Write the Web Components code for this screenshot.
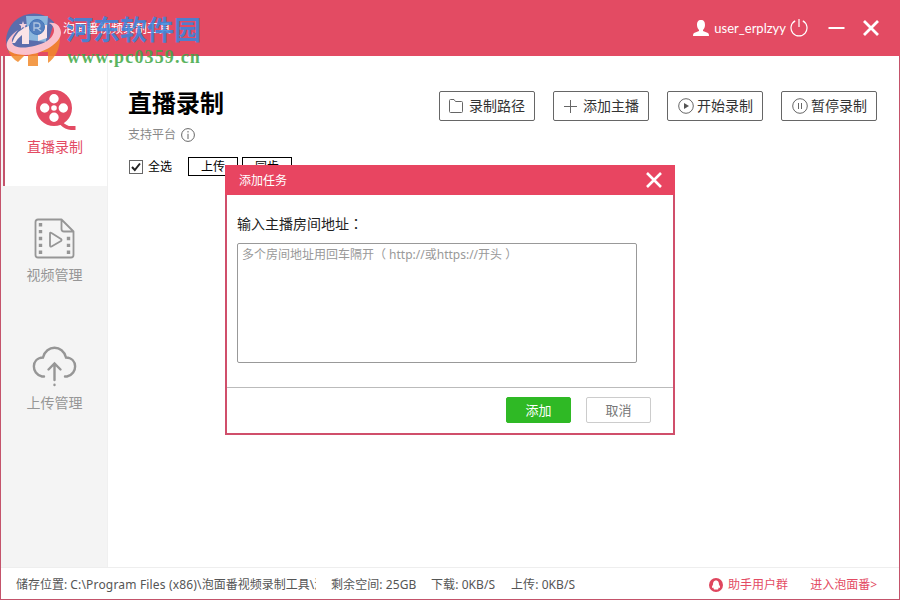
<!DOCTYPE html>
<html lang="zh-CN">
<head>
<meta charset="utf-8">
<title>泡面番视频录制工具</title>
<style>
html, body {
  margin: 0;
  height: 100%;
  overflow: hidden;
}
body {
  --color-main: #e34b63;
  --color-edge: #c4536b;
  --color-gray: #969696;
  --color-dark: #333;
  font: 12px/16px "Noto Sans", "Noto Sans CJK SC", sans-serif;
  color: #555;
  background: #fff;
}
</style>
</head>
<body>
<recorder-app></recorder-app>

<script>
const define = (name, html) => {
  const template = document.createElement('template');
  template.innerHTML = html;
  customElements.define(name, class extends HTMLElement {
    constructor() {
      super();
      this.attachShadow({mode: 'open'});
      this.shadowRoot.appendChild(template.content.cloneNode(true));
    }
  });
};

// Badge that lies over the top left corner
define('site-mark', `
<style>
:host {
  position: absolute;
  left: 4px;
  top: 9px;
  width: 200px;
  height: 60px;
  opacity: 0.85;
  pointer-events: none;
}
svg { position: absolute; left: 0; top: 0; }
.name, .url { position: absolute; white-space: nowrap; }
.name {
  left: 62px;
  top: 4px;
  font: 700 27px/32px "Noto Sans CJK SC", sans-serif;
  color: #3687df;
}
.url {
  left: 63px;
  top: 37px;
  font: 700 18px/22px "Liberation Serif", serif;
  letter-spacing: 1.15px;
  color: #3fa845;
}
</style>
<svg width="60" height="60" viewBox="0 0 60 60">
  <path d="M2 31A28 28 0 0 1 50 13L44 34L5 44Q2 38 2 31Z" fill="#4474b9"/>
  <path d="M4 41Q31 47 56 28Q56 45 44 54V43H34V57H24V43L14 53Q7 49 4 41Z" fill="#f28a2b"/>
  <path d="M22 7H44L42 33L24 31Z" fill="#7cc9f3"/>
  <path d="M14 21C-4 34 0 46 22 46C40 45 58 33 57 23C56 16 51 13 45 14C52 17 52 26 43 32C31 39 9 42 8 33Q7 29 14 21Z" fill="#ffd6df"/>
  <path d="M8 34Q13 20 25 17V35H18V26Q14 29 11 34Z M34 32V16H43V29Z" fill="#fff"/>
  <path d="M19 12l1 3 3 0-2 2 1 3-3-2-2 2 0-3-2-2 3 0Z" fill="#f5e8f2"/>
  <circle cx="33" cy="18" r="7.500" fill="#3d8ad0" stroke="#287dc8"/>
  <path d="M30 22V14H33Q36 14 36 17Q36 19 33 19H30M33 19L37 22" fill="none" stroke="#a7daf6" stroke-width="1.300"/>
</svg>
<span class="name">河东软件园</span>
<span class="url">www.pc0359.cn</span>
`);

define('title-bar', `
<style>
:host {
  display: flex;
  align-items: center;
  height: 56px;
  padding: 0 20px 0 63px;
  box-sizing: border-box;
  color: #fff;
  background: var(--color-main);
}
.title { flex: 1; padding-top: 2px; }
.user { font: 13px/16px Lato, sans-serif; margin: 0 4px 0 5px; }
svg { display: block; fill: none; stroke: #fff; }
.min { margin: 0 17px 0 20px; }
</style>
<span class="title"><slot></slot></span>
<svg width="16" height="16" viewBox="0 0 16 16"><path d="M8 0C5 0 4 2 4 5c0 2 1 4 2 5v1L1 13q-1 .5-1 3h16q0-2.500-1-3l-5-2v-1c1-1 2-3 2-5 0-3-1-5-4-5Z" fill="#fff" stroke="none"/></svg>
<span class="user"><slot name="user"></slot></span>
<svg width="18" height="18" viewBox="0 0 18 18" stroke-width="1.200"><path d="M5.200 1.900A8 8 0 1 0 12.800 1.900M9 0v8"/></svg>
<svg class="min" width="17" height="18" viewBox="0 0 17 18" stroke-width="2"><path d="M.5 9H16.500"/></svg>
<svg width="18" height="18" viewBox="0 0 18 18" stroke-width="2.800"><path d="M2 2 16 16M16 2 2 16"/></svg>
`);

define('side-item', `
<style>
:host {
  display: flex;
  flex-direction: column;
  align-items: center;
  height: 128px;
  padding: 32px 1px 0 0;
  box-sizing: border-box;
  font-size: 14px;
  line-height: 20px;
  color: var(--color-gray);
}
:host([active]) {
  height: 130px;
  padding: 34px 2px 0 0;
  border-left: 2px solid var(--color-edge);
  color: var(--color-main);
  background: #fff;
}
.icon { height: 47px; }
</style>
<div class="icon"><slot name="icon"></slot></div>
<slot></slot>
`);

define('side-menu', `
<style>
:host {
  display: block;
  width: 107px;
  box-sizing: border-box;
  padding-left: 2px;
  border-right: 1px solid #f0f0f0;
  background: #f4f4f4;
}
svg { display: block; fill: none; stroke: currentColor; }
.reel { margin-left: 2px; }
</style>
<side-item active>
  <svg slot="icon" class="reel" width="41" height="41" viewBox="0 0 41 41">
    <path fill="currentColor" stroke="none" fill-rule="evenodd" d="M18 0a18 18 0 1 1 0 36a18 18 0 1 1 0-36ZM18 4a4.700 4.700 0 1 0 0 9.400a4.700 4.700 0 1 0 0-9.400ZM18 22.600a4.700 4.700 0 1 0 0 9.400a4.700 4.700 0 1 0 0-9.400ZM8.700 13.300a4.700 4.700 0 1 0 0 9.400a4.700 4.700 0 1 0 0-9.400ZM27.300 13.300a4.700 4.700 0 1 0 0 9.400a4.700 4.700 0 1 0 0-9.400ZM18 15.200a2.800 2.800 0 1 0 0 5.600a2.800 2.800 0 1 0 0-5.600Z"/>
    <path d="M25 33Q30 38 35 38H39.500" stroke-width="3.800"/>
  </svg>
  直播录制
</side-item>
<side-item>
  <svg slot="icon" width="41" height="41" viewBox="0 0 41 41" stroke-width="1.800">
    <path d="M27.500 1.500H4Q1.500 1.500 1.500 4V37Q1.500 39.500 4 39.500H37Q39.500 39.500 39.500 37V13.500ZM27.500 1.500V11Q27.500 13.500 30 13.500H39.500M16 15.500Q16 14 17.500 15L27 21Q28 22 27 23L17.500 28.500Q16 29 16 27.500Z" stroke-linejoin="round"/>
    <path d="M6.500 5V37" stroke-width="3.400" stroke-dasharray="3.400 3.500"/>
    <path d="M34.500 18.800V36" stroke-width="3.400" stroke-dasharray="3.400 3.500"/>
  </svg>
  视频管理
</side-item>
<side-item>
  <svg slot="icon" width="45" height="41" viewBox="0 0 45 41" stroke-width="2.400" stroke-linecap="round">
    <path d="M12 30.500H10C-1 28-1 12 11 11.500C14-1.500 31-1.500 34 11.500C46 12 46 28 35 30.500H33M22.500 34V18M16.500 23.500 22.500 17.500 28.500 23.500M22.500 38.800V39"/>
  </svg>
  上传管理
</side-item>
`);

define('tool-button', `
<style>
:host {
  display: flex;
  align-items: center;
  gap: 5px;
  width: 96px;
  height: 30px;
  padding-left: 9px;
  box-sizing: border-box;
  border: 1px solid #666;
  border-radius: 2px;
  font-size: 14px;
  line-height: 20px;
  color: var(--color-dark);
  white-space: nowrap;
}
:host([round]) { gap: 3px; padding-left: 10px; }
</style>
<slot name="icon"></slot>
<span><slot></slot></span>
`);

define('main-panel', `
<style>
:host { display: block; flex: 1; padding: 31px 22px 0 20px; }
.top { display: flex; justify-content: space-between; align-items: flex-start; }
h1 { margin: 0; font: 700 24px/30px "Noto Sans CJK SC", sans-serif; color: #000; }
.tools { display: flex; gap: 18px; padding-top: 4px; }
.support { display: flex; align-items: center; gap: 5px; margin-top: 4px; height: 20px; color: #888; }
.row { display: flex; align-items: center; height: 19px; margin-top: 12px; color: #000; }
.check { margin: 0 5px 0 1px; }
.small {
  width: 50px;
  height: 19px;
  margin-left: 4px;
  box-sizing: border-box;
  border: 1px solid #000;
  line-height: 17px;
  text-align: center;
}
.small.first { margin-left: 16px; }
svg { display: block; fill: none; stroke: #666; }
</style>
<div class="top">
  <h1>直播录制</h1>
  <div class="tools">
    <tool-button>
      <svg slot="icon" width="15" height="15" viewBox="0 0 15 15"><path d="M.5 1.500Q.5.500 1.500.500H5L6.500 2.500H12.500Q13.500 2.500 13.500 3.500V12.500Q13.500 13.500 12.500 13.500H1.500Q.5 13.500.5 12.500Z"/></svg>录制路径
    </tool-button>
    <tool-button>
      <svg slot="icon" width="15" height="15" viewBox="0 0 15 15"><path d="M7.500 1V14M1 7.500H14"/></svg>添加主播
    </tool-button>
    <tool-button round>
      <svg slot="icon" width="16" height="16" viewBox="0 0 16 16"><circle cx="8" cy="8" r="7.300"/><path d="M6 5V11L11 8Z" fill="#555" stroke="none"/></svg>开始录制
    </tool-button>
    <tool-button round>
      <svg slot="icon" width="16" height="16" viewBox="0 0 16 16"><circle cx="8" cy="8" r="7.300"/><path d="M6.500 5V11M9.500 5V11"/></svg>暂停录制
    </tool-button>
  </div>
</div>
<div class="support">支持平台
  <svg width="14" height="14" viewBox="0 0 14 14"><circle cx="7" cy="7" r="6.400"/><path d="M7 3V4.500M7 5.800V11"/></svg>
</div>
<div class="row">
  <svg class="check" width="14" height="14" viewBox="0 0 14 14"><rect x=".5" y=".5" width="13" height="13"/><path d="M3 7 5.800 10 11 3.500" stroke="#222" stroke-width="2"/></svg>
  <span>全选</span>
  <div class="small first">上传</div>
  <div class="small">同步</div>
</div>
`);

define('status-bar', `
<style>
:host {
  display: flex;
  align-items: center;
  height: 32px;
  padding: 2px 22px 0 15px;
  box-sizing: border-box;
  border-top: 1px solid #eee;
  white-space: nowrap;
}
.path { width: 300px; overflow: hidden; }
.dir { letter-spacing: 0.17px; }
.space { margin-left: 15px; width: 100px; }
.down { width: 80px; }
.up { flex: 1; }
.space, .down, .up { letter-spacing: 0.08px; }
.link { color: var(--color-main); }
.group { margin: 0 22px 0 5px; }
</style>
<span class="path">储存位置: <span class="dir">C:\\Program Files (x86)\\</span>泡面番视频录制工具\\泡</span>
<span class="space">剩余空间: 25GB</span>
<span class="down">下载: 0KB/S</span>
<span class="up">上传: 0KB/S</span>
<svg width="14" height="14" viewBox="0 0 14 14"><circle cx="7" cy="7" r="7" fill="#df465e"/><path d="M7 2.500C4.500 2.500 4 5 4 6.500Q2.500 8.500 3 10L4.200 9.500 5 11.500H9L9.800 9.500 11 10Q11.500 8.500 10 6.500C10 5 9.500 2.500 7 2.500Z" fill="#fff"/></svg>
<span class="link group">助手用户群</span>
<span class="link">进入泡面番&gt;</span>
`);

define('task-dialog', `
<style>
:host {
  position: absolute;
  left: 225px;
  top: 165px;
  display: flex;
  flex-direction: column;
  width: 450px;
  height: 270px;
  box-sizing: border-box;
  border: 2px solid #d04f6b;
  border-top: 0;
  background: #fff;
}
header {
  display: flex;
  align-items: center;
  justify-content: space-between;
  height: 30px;
  margin: 0 -2px;
  padding: 0 12px 0 14px;
  color: #fff;
  background: #e84561;
}
header span { padding-top: 2px; }
.body { flex: 1; padding: 18px 36px 0 10px; }
label { display: block; font-size: 14px; line-height: 20px; color: #222; }
/* this face sets the full-width colon in the middle of its box */
.colon { font-family: "Noto Sans CJK TC", sans-serif; }
.input {
  height: 120px;
  margin-top: 9px;
  padding: 3px 4px;
  box-sizing: border-box;
  border: 1px solid #999;
  border-radius: 2px;
  color: #999;
}
footer {
  display: flex;
  gap: 15px;
  justify-content: flex-end;
  height: 46px;
  padding: 9px 22px 0 0;
  box-sizing: border-box;
  border-top: 1px solid #bbb;
}
.btn {
  width: 65px;
  height: 26px;
  box-sizing: border-box;
  border: 1px solid #ccc;
  border-radius: 2px;
  font-size: 13px;
  line-height: 25px;
  text-align: center;
  color: #777;
}
.btn.ok { border-color: #2fb925; color: #fff; background: #2fb925; }
</style>
<header>
  <span>添加任务</span>
  <svg width="18" height="18" viewBox="0 0 18 18"><path d="M2 2 16 16M16 2 2 16" stroke="#fff" stroke-width="2.600"/></svg>
</header>
<div class="body">
  <label>输入主播房间地址<span class="colon" lang="zh-TW">：</span></label>
  <div class="input" role="textbox">多个房间地址用回车隔开（ http://或https://开头 ）</div>
</div>
<footer>
  <div class="btn ok">添加</div>
  <div class="btn">取消</div>
</footer>
`);

define('recorder-app', `
<style>
:host {
  position: relative;
  display: flex;
  flex-direction: column;
  width: 900px;
  height: 600px;
}
.window {
  display: flex;
  flex: 1;
  flex-direction: column;
  border: 1px solid var(--color-edge);
  border-top: 0;
}
.content { display: flex; flex: 1; }
</style>
<title-bar>泡面番视频录制工具<span slot="user">user_erplzyy</span></title-bar>
<div class="window">
  <div class="content">
    <side-menu></side-menu>
    <main-panel></main-panel>
  </div>
  <status-bar></status-bar>
</div>
<site-mark></site-mark>
<task-dialog></task-dialog>
`);
</script>
</body>
</html>
